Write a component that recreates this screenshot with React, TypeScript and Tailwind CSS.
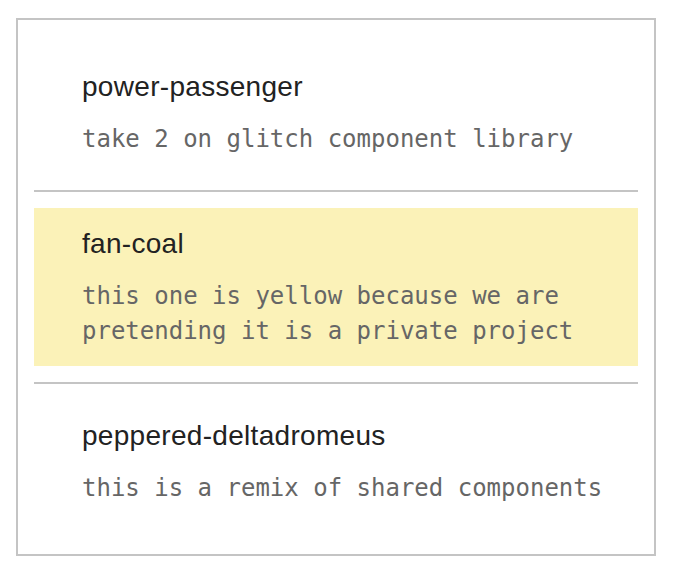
const projects = [
  {
    name: "power-passenger",
    description: "take 2 on glitch component library",
    isPrivate: false,
  },
  {
    name: "fan-coal",
    description: "this one is yellow because we are pretending it is a private project",
    isPrivate: true,
  },
  {
    name: "peppered-deltadromeus",
    description: "this is a remix of shared components",
    isPrivate: false,
  },
];

function ProjectItem({ project }: { project: (typeof projects)[number] }) {
  return (
    <li
      className={
        project.isPrivate
          ? "my-4 pt-[20px] pb-[17px] pl-12 pr-4 bg-[#fbf2b8]"
          : "my-4 pt-[20px] pb-[17px] pl-12 pr-4"
      }
    >
      <p className="text-[28px] leading-[32px] tracking-[0.3px] text-[#222222] font-['Liberation_Sans',Arial,sans-serif]">
        {project.name}
      </p>
      <p className="mt-[19px] text-[24px] leading-[35px] text-[#666666] font-['DejaVu_Sans_Mono',monospace]">
        {project.description}
      </p>
    </li>
  );
}

export default function App() {
  return (
    <div className="min-h-screen bg-white pt-[18px] pl-4">
      <div className="w-[640px] border-2 border-[#c4c4c4] px-4 py-[15px]">
        <ul className="flex flex-col">
          {projects.map((project, i) => (
            <div key={project.name}>
              {i > 0 ? <hr className="h-[2px] border-0 bg-[#c4c4c4]" /> : null}
              <ProjectItem project={project} />
            </div>
          ))}
        </ul>
      </div>
    </div>
  );
}
